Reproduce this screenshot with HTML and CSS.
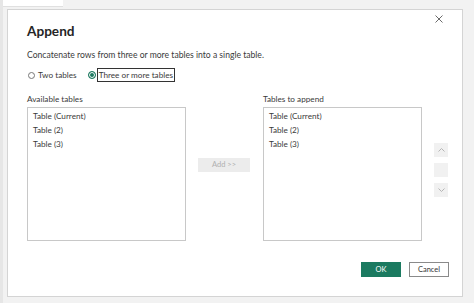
FILE: index.html
```html
<!DOCTYPE html>
<html lang="en">
<head>
    <meta charset="UTF-8">
    <meta name="viewport" content="width=device-width, initial-scale=1.0">
    <title>Append</title>
    <link rel="stylesheet" href="styles.css">
</head>
<body>
    <div class="backdrop">
        <div class="tab-strip"><div class="tab"></div></div>
        <div class="dialog">
            <div class="close">
                <svg width="8" height="8" viewBox="0 0 8 8"><path d="M0.5 0.5 L7.5 7.5 M7.5 0.5 L0.5 7.5" stroke="#6a6a6a" stroke-width="1"/></svg>
            </div>
            <h1>Append</h1>
            <p class="desc">Concatenate rows from three or more tables into a single table.</p>
            <div class="radios">
                <label class="radio"><span class="dot"></span>Two tables</label>
                <label class="radio checked"><span class="dot"></span><span class="focus">Three or more tables</span></label>
            </div>
            <div class="lists">
                <div class="col">
                    <div class="label">Available tables</div>
                    <div class="listbox">
                        <div>Table (Current)</div>
                        <div>Table (2)</div>
                        <div>Table (3)</div>
                    </div>
                </div>
                <div class="middle">
                    <div class="add">Add &gt;&gt;</div>
                </div>
                <div class="col">
                    <div class="label">Tables to append</div>
                    <div class="listbox">
                        <div>Table (Current)</div>
                        <div>Table (2)</div>
                        <div>Table (3)</div>
                    </div>
                </div>
                <div class="order">
                    <div class="sq">
                        <svg width="7" height="4" viewBox="0 0 7 4"><path d="M0.5 3.5 L3.5 0.5 L6.5 3.5" fill="none" stroke="#b5b5b5"/></svg>
                    </div>
                    <div class="sq"></div>
                    <div class="sq">
                        <svg width="7" height="4" viewBox="0 0 7 4"><path d="M0.5 0.5 L3.5 3.5 L6.5 0.5" fill="none" stroke="#b5b5b5"/></svg>
                    </div>
                </div>
            </div>
            <div class="footer">
                <button class="ok">OK</button>
                <button class="cancel">Cancel</button>
            </div>
        </div>
    </div>
</body>
</html>
```

FILE: styles.css
```css
body {
    margin: 0;
    font-family: 'Lato', 'Open Sans', sans-serif;
    background: #f2f2f2;
    color: #3a3a3a;
    width: 474px;
    height: 303px;
    overflow: hidden;
}
.backdrop {
    position: relative;
    height: 303px;
    border-left: 3px solid #e6e6e6;
    box-sizing: border-box;
}
.tab-strip {
    height: 7px;
}
.tab {
    width: 60px;
    height: 6px;
    background: #fff;
    border-bottom: 1px solid #e0e0e0;
}
.dialog {
    position: absolute;
    left: 4px;
    top: 9px;
    width: 456px;
    height: 288px;
    background: #fff;
    border: 1px solid #d4d4d4;
    box-sizing: border-box;
    padding: 12px 0 0 19px;
}
.close {
    position: absolute;
    right: 19px;
    top: 5px;
}
.close svg {
    display: block;
}
h1 {
    margin: 0;
    font-size: 13.6px;
    font-weight: 700;
    color: #252525;
    line-height: 18px;
}
.desc {
    margin: 8px 0 0;
    font-size: 8.6px;
    line-height: 14px;
}
.radios {
    display: flex;
    gap: 10px;
    margin-top: 6px;
    font-size: 8.2px;
    line-height: 14px;
}
.radio {
    display: flex;
    align-items: center;
}
.dot {
    width: 5px;
    height: 5px;
    border: 1px solid #777;
    border-radius: 50%;
    margin: 0 3px 0 1px;
}
.checked .dot {
    border-color: #1e7a61;
    background: #1e7a61;
    box-shadow: inset 0 0 0 1px #fff;
    width: 6px;
    height: 6px;
    margin-right: 1px;
}
.focus {
    border: 1px solid #333;
    padding: 0 1px;
    line-height: 12px;
}
.lists {
    display: flex;
    margin-top: 10px;
}
.col {
    width: 159px;
}
.label {
    font-size: 8.2px;
    line-height: 14px;
}
.listbox {
    margin-top: 1px;
    height: 134px;
    border: 1px solid #c8c8c8;
    box-sizing: border-box;
    padding: 1px 5px;
    font-size: 8.2px;
    line-height: 14px;
}
.middle {
    width: 77px;
    padding-top: 66px;
    padding-left: 12px;
    box-sizing: border-box;
}
.add {
    width: 52px;
    height: 14px;
    background: #ececec;
    color: #b0b0b0;
    font-size: 7.5px;
    line-height: 14px;
    text-align: center;
}
.order {
    display: flex;
    flex-direction: column;
    gap: 6px;
    margin-left: 12px;
    margin-top: 51px;
}
.sq {
    width: 14px;
    height: 14px;
    background: #f1f1f1;
    display: flex;
    align-items: center;
    justify-content: center;
}
.footer {
    display: flex;
    justify-content: flex-end;
    gap: 8px;
    margin-top: 21px;
    padding-right: 13px;
}
button {
    width: 40px;
    height: 15px;
    font-family: inherit;
    font-size: 7.5px;
    padding: 0;
    line-height: 13px;
}
.ok {
    background: #1b7a60;
    color: #fff;
    border: 1px solid #1b7a60;
}
.cancel {
    background: #fff;
    color: #333;
    border: 1px solid #8a8a8a;
}
```
